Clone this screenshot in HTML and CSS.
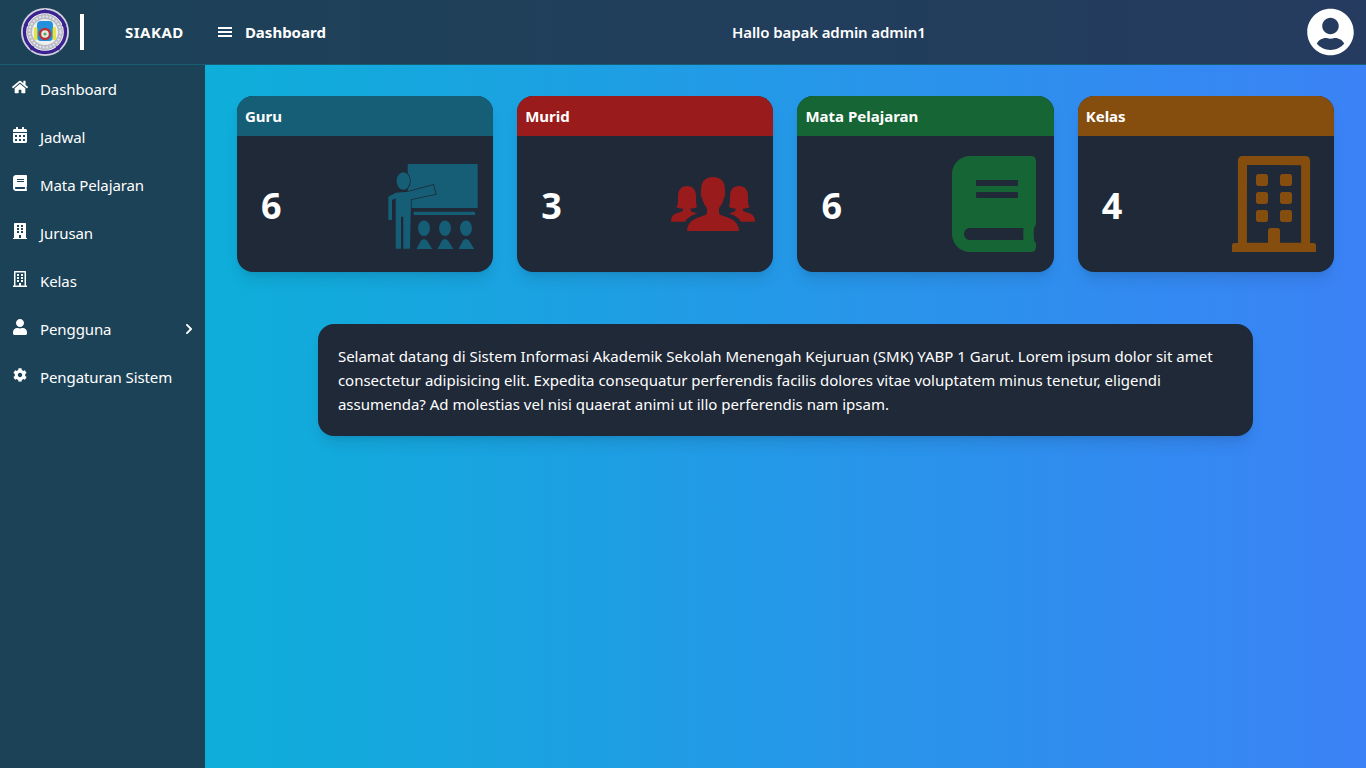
FILE: index.html
```html
<!DOCTYPE html>
<html lang="id">
<head>
  <meta charset="UTF-8" />
  <title>SIAKAD - Dashboard</title>
  <link rel="stylesheet" href="styles.css">
</head>
<body>
  <header class="topbar">
    <div class="brand">
      <svg class="logo" viewBox="0 0 48 48">
        <circle cx="24" cy="24" r="24" fill="#d5d3de"/>
        <circle cx="24" cy="24" r="22" fill="#fff"/>
        <circle cx="24" cy="24" r="20.5" fill="none" stroke="#3a2390" stroke-width="3.4"/>
        <path d="M24 1l4 4h-8zM45.5 17l-5 1.500 2-5.500zM38 43l-3-5 5.500-.5zM10 43l3-5-5.500-.5zM2.500 17l5 1.500-2-5.500z" fill="#3a2390"/>
        <circle cx="24" cy="24" r="18" fill="#b8bac4"/>
        <circle cx="24" cy="24" r="15.500" fill="none" stroke="#e4e4ea" stroke-width="2" stroke-dasharray="2 1.500"/>
        <circle cx="24" cy="24" r="13" fill="#eef0ee"/>
        <rect x="16" y="13" width="16" height="20" rx="4" fill="#2290dc"/>
        <rect x="13" y="19" width="3.400" height="13" rx="1.500" fill="#e9e33f"/>
        <rect x="31.600" y="19" width="3.400" height="13" rx="1.500" fill="#e9e33f"/>
        <circle cx="24" cy="26" r="6.200" fill="#b93232"/>
        <circle cx="24" cy="26" r="3.800" fill="#e3ebe0"/>
        <circle cx="24" cy="26" r="1.600" fill="#5fa56a"/>
      </svg>
      <span class="brand-line"></span>
      <span class="brand-name">SIAKAD</span>
    </div>
    <div class="page-name">
      <svg class="bars" viewBox="0 0 14 12"><path d="M0 1h14v2H0zM0 5h14v2H0zM0 9h14v2H0z" fill="#fff"/></svg>
      <span>Dashboard</span>
    </div>
    <div class="greeting">Hallo bapak admin admin1</div>
    <svg class="avatar" viewBox="0 0 496 512"><path fill="#fff" d="M248 8C111 8 0 119 0 256s111 248 248 248 248-111 248-248S385 8 248 8zm0 96c48.6 0 88 39.4 88 88s-39.4 88-88 88-88-39.4-88-88 39.4-88 88-88zm0 344c-58.7 0-111.3-26.6-146.5-68.2 18.8-35.4 55.6-59.8 98.5-59.8 2.4 0 4.8.4 7.1 1.1 13 4.2 26.6 6.9 40.9 6.9 14.3 0 28-2.7 40.9-6.9 2.3-.7 4.7-1.1 7.1-1.1 42.9 0 79.7 24.4 98.5 59.8C359.3 421.4 306.7 448 248 448z"/></svg>
  </header>

  <div class="layout">
    <nav class="sidebar">
      <a class="menu-item">
        <svg class="menu-icon" viewBox="0 0 576 512"><path d="M280.37 148.26L96 300.11V464a16 16 0 0 0 16 16l112.06-.29a16 16 0 0 0 15.92-16V368a16 16 0 0 1 16-16h64a16 16 0 0 1 16 16v95.64a16 16 0 0 0 16 16.05L464 480a16 16 0 0 0 16-16V300L295.67 148.26a12.19 12.19 0 0 0-15.3 0zM571.6 251.47L488 182.56V44.05a12 12 0 0 0-12-12h-56a12 12 0 0 0-12 12v72.61L318.47 43a48 48 0 0 0-61 0L4.34 251.47a12 12 0 0 0-1.6 16.9l25.5 31A12 12 0 0 0 45.15 301l235.22-193.74a12.19 12.19 0 0 1 15.3 0L530.9 301a12 12 0 0 0 16.9-1.6l25.5-31a12 12 0 0 0-1.7-16.93z"/></svg>
        <span>Dashboard</span>
      </a>
      <a class="menu-item">
        <svg class="menu-icon" viewBox="0 0 448 512"><path d="M0 464c0 26.5 21.5 48 48 48h352c26.5 0 48-21.5 48-48V192H0v272zm320-196c0-6.6 5.4-12 12-12h40c6.6 0 12 5.4 12 12v40c0 6.6-5.4 12-12 12h-40c-6.6 0-12-5.4-12-12v-40zm0 128c0-6.6 5.4-12 12-12h40c6.6 0 12 5.4 12 12v40c0 6.6-5.4 12-12 12h-40c-6.6 0-12-5.4-12-12v-40zM192 268c0-6.6 5.4-12 12-12h40c6.6 0 12 5.4 12 12v40c0 6.6-5.4 12-12 12h-40c-6.6 0-12-5.4-12-12v-40zm0 128c0-6.6 5.4-12 12-12h40c6.6 0 12 5.4 12 12v40c0 6.6-5.4 12-12 12h-40c-6.6 0-12-5.4-12-12v-40zM64 268c0-6.6 5.4-12 12-12h40c6.6 0 12 5.4 12 12v40c0 6.6-5.4 12-12 12H76c-6.6 0-12-5.4-12-12v-40zm0 128c0-6.6 5.4-12 12-12h40c6.6 0 12 5.4 12 12v40c0 6.6-5.4 12-12 12H76c-6.6 0-12-5.4-12-12v-40zM400 64h-48V16c0-8.8-7.2-16-16-16h-32c-8.8 0-16 7.2-16 16v48H160V16c0-8.8-7.2-16-16-16h-32c-8.8 0-16 7.2-16 16v48H48C21.5 64 0 85.5 0 112v48h448v-48c0-26.5-21.5-48-48-48z"/></svg>
        <span>Jadwal</span>
      </a>
      <a class="menu-item">
        <svg class="menu-icon" viewBox="0 0 448 512"><path d="M448 360V24c0-13.3-10.7-24-24-24H96C43 0 0 43 0 96v320c0 53 43 96 96 96h328c13.3 0 24-10.7 24-24v-16c0-7.5-3.5-14.3-8.9-18.7-4.2-15.4-4.2-59.3 0-74.7 5.4-4.3 8.9-11.1 8.9-18.6zM128 134c0-3.3 2.7-6 6-6h212c3.3 0 6 2.7 6 6v20c0 3.3-2.7 6-6 6H134c-3.3 0-6-2.7-6-6v-20zm0 64c0-3.3 2.7-6 6-6h212c3.3 0 6 2.7 6 6v20c0 3.3-2.7 6-6 6H134c-3.3 0-6-2.7-6-6v-20zm253.4 250H96c-17.7 0-32-14.3-32-32 0-17.6 14.4-32 32-32h285.4c-1.9 17.1-1.9 46.9 0 64z"/></svg>
        <span>Mata Pelajaran</span>
      </a>
      <a class="menu-item">
        <svg class="menu-icon" viewBox="0 0 448 512"><path d="M436 480h-20V24c0-13.255-10.745-24-24-24H56C42.745 0 32 10.745 32 24v456H12c-6.627 0-12 5.373-12 12v20h448v-20c0-6.627-5.373-12-12-12zM128 76c0-6.627 5.373-12 12-12h40c6.627 0 12 5.373 12 12v40c0 6.627-5.373 12-12 12h-40c-6.627 0-12-5.373-12-12V76zm0 96c0-6.627 5.373-12 12-12h40c6.627 0 12 5.373 12 12v40c0 6.627-5.373 12-12 12h-40c-6.627 0-12-5.373-12-12v-40zm52 148h-40c-6.627 0-12-5.373-12-12v-40c0-6.627 5.373-12 12-12h40c6.627 0 12 5.373 12 12v40c0 6.627-5.373 12-12 12zm76 160h-64v-84c0-6.627 5.373-12 12-12h40c6.627 0 12 5.373 12 12v84zm64-172c0 6.627-5.373 12-12 12h-40c-6.627 0-12-5.373-12-12v-40c0-6.627 5.373-12 12-12h40c6.627 0 12 5.373 12 12v40zm0-96c0 6.627-5.373 12-12 12h-40c-6.627 0-12-5.373-12-12v-40c0-6.627 5.373-12 12-12h40c6.627 0 12 5.373 12 12v40zm0-96c0 6.627-5.373 12-12 12h-40c-6.627 0-12-5.373-12-12V76c0-6.627 5.373-12 12-12h40c6.627 0 12 5.373 12 12v40z"/></svg>
        <span>Jurusan</span>
      </a>
      <a class="menu-item">
        <svg class="menu-icon" viewBox="0 0 448 512"><path d="M128 148v-40c0-6.6 5.4-12 12-12h40c6.6 0 12 5.4 12 12v40c0 6.6-5.4 12-12 12h-40c-6.6 0-12-5.4-12-12zm140 12h40c6.6 0 12-5.4 12-12v-40c0-6.6-5.4-12-12-12h-40c-6.6 0-12 5.4-12 12v40c0 6.6 5.4 12 12 12zm-128 96h40c6.6 0 12-5.4 12-12v-40c0-6.6-5.4-12-12-12h-40c-6.6 0-12 5.4-12 12v40c0 6.6 5.4 12 12 12zm128 0h40c6.6 0 12-5.4 12-12v-40c0-6.6-5.4-12-12-12h-40c-6.6 0-12 5.4-12 12v40c0 6.6 5.4 12 12 12zm-76 84v-40c0-6.6-5.4-12-12-12h-40c-6.6 0-12 5.4-12 12v40c0 6.6 5.4 12 12 12h40c6.6 0 12-5.4 12-12zm76 12h40c6.6 0 12-5.4 12-12v-40c0-6.6-5.4-12-12-12h-40c-6.6 0-12 5.4-12 12v40c0 6.6 5.4 12 12 12zm180 124v36H0v-36c0-6.6 5.4-12 12-12h19.5V24c0-13.3 10.7-24 24-24h337c13.3 0 24 10.7 24 24v440H436c6.6 0 12 5.4 12 12zM79.5 463H192v-67c0-6.6 5.4-12 12-12h40c6.6 0 12 5.4 12 12v67h112.5V49L80 48l-.5 415z"/></svg>
        <span>Kelas</span>
      </a>
      <a class="menu-item">
        <svg class="menu-icon" viewBox="0 0 448 512"><path d="M224 256c70.7 0 128-57.3 128-128S294.7 0 224 0 96 57.3 96 128s57.3 128 128 128zm89.6 32h-16.7c-22.2 10.2-46.9 16-72.9 16s-50.6-5.8-72.9-16h-16.7C60.2 288 0 348.2 0 422.4V464c0 26.5 21.5 48 48 48h352c26.5 0 48-21.5 48-48v-41.6c0-74.2-60.2-134.4-134.4-134.4z"/></svg>
        <span>Pengguna</span>
        <svg class="menu-arrow" viewBox="0 0 320 512"><path d="M285.476 272.971L91.132 467.314c-9.373 9.373-24.569 9.373-33.941 0l-22.667-22.667c-9.357-9.357-9.375-24.522-.04-33.901L188.505 256 34.484 101.255c-9.335-9.379-9.317-24.544.04-33.901l22.667-22.667c9.373-9.373 24.569-9.373 33.941 0L285.475 239.03c9.373 9.372 9.373 24.568.001 33.941z"/></svg>
      </a>
      <a class="menu-item">
        <svg class="menu-icon icon-cog" viewBox="0 0 512 512"><path d="M487.4 315.7l-42.6-24.6c4.3-23.2 4.3-47 0-70.2l42.6-24.6c4.9-2.8 7.1-8.6 5.5-14-11.1-35.6-30-67.8-54.7-94.6-3.8-4.1-10-5.1-14.8-2.3L380.8 110c-17.9-15.4-38.5-27.3-60.8-35.1V25.8c0-5.6-3.9-10.5-9.4-11.7-36.7-8.2-74.3-7.8-109.2 0-5.5 1.2-9.4 6.1-9.4 11.7V75c-22.2 7.9-42.8 19.8-60.8 35.1L88.7 85.5c-4.9-2.8-11-1.9-14.8 2.3-24.7 26.7-43.6 58.9-54.7 94.6-1.7 5.4.6 11.2 5.5 14L67.3 221c-4.3 23.2-4.3 47 0 70.2l-42.6 24.6c-4.9 2.8-7.1 8.6-5.5 14 11.1 35.6 30 67.8 54.7 94.6 3.8 4.1 10 5.1 14.8 2.3l42.6-24.6c17.9 15.4 38.5 27.3 60.8 35.1v49.2c0 5.6 3.9 10.5 9.4 11.7 36.7 8.2 74.3 7.8 109.2 0 5.5-1.2 9.4-6.1 9.4-11.7v-49.2c22.2-7.9 42.8-19.8 60.8-35.1l42.6 24.6c4.9 2.8 11 1.9 14.8-2.3 24.7-26.7 43.6-58.9 54.7-94.6 1.5-5.5-.7-11.3-5.6-14.1zM256 336c-44.1 0-80-35.9-80-80s35.9-80 80-80 80 35.9 80 80-35.9 80-80 80z"/></svg>
        <span>Pengaturan Sistem</span>
      </a>
    </nav>

    <main class="content">
      <section class="cards">
        <div class="card card-cyan">
          <div class="card-title">Guru</div>
          <div class="card-body">
            <span class="card-num">6</span>
            <svg class="card-icon icon-teacher" viewBox="0 0 90 86">
              <path d="M19.7 1h70v44h-70z"/>
              <path d="M25.7 48.7H87V52H25.7z"/>
              <ellipse cx="36" cy="65.3" rx="6" ry="7.7"/>
              <ellipse cx="57" cy="65.3" rx="6" ry="7.7"/>
              <ellipse cx="78" cy="65.3" rx="6" ry="7.7"/>
              <path d="M28.500 86L33 77.500Q36 74.500 39 77.500L44.300 86zM49.500 86L54 77.500Q57 74.500 60 77.500L65.300 86zM70.500 86L75 77.500Q78 74.500 81 77.500L86.300 86z"/>
              <g class="teacher-figure">
                <ellipse cx="15.3" cy="18" rx="6.7" ry="8.7"/>
                <path d="M.3 33.7L7.7 29.7 20.3 28.7 45.3 22 47.7 31 23 36.3 22 85.7H15.3V53.7H13V85.7H7.7V35.3L4 37V57H.3z"/>
              </g>
            </svg>
          </div>
        </div>
        <div class="card card-red">
          <div class="card-title">Murid</div>
          <div class="card-body">
            <span class="card-num">3</span>
            <svg class="card-icon icon-users" viewBox="0 0 84 55">
              <path id="side-girl" d="M16 9C10 9 7 13 7 19V25C7 28 6 29 5 30C7 31 10 31.5 12 31.5V33C12 35 8 35 4 37C1.5 38 0 41 0 44.7H14C16 41 20 38.5 26 36.5C22 35 20 35 19.5 33V31.5C21 31.5 24 31 26 30L25 25V19C25 13 22 9 16 9Z"/>
              <use href="#side-girl" transform="matrix(-1 0 0 1 84 0)"/>
              <path d="M42 0C34 0 30 5 30 13V18C30 20 31 21 31.5 22C32 26 34 29 36 31V36C36 38 31 39 26 41C20 43 16 48 16 54H68C68 48 64 43 58 41C53 39 48 38 48 36V31C50 29 52 26 52.5 22C53 21 54 20 54 18V13C54 5 50 0 42 0Z"/>
            </svg>
          </div>
        </div>
        <div class="card card-green">
          <div class="card-title">Mata Pelajaran</div>
          <div class="card-body">
            <span class="card-num">6</span>
            <svg class="card-icon icon-big" viewBox="0 0 448 512"><path d="M448 360V24c0-13.3-10.7-24-24-24H96C43 0 0 43 0 96v320c0 53 43 96 96 96h328c13.3 0 24-10.7 24-24v-16c0-7.5-3.5-14.3-8.9-18.7-4.2-15.4-4.2-59.3 0-74.7 5.4-4.3 8.9-11.1 8.9-18.6zM128 134c0-3.3 2.7-6 6-6h212c3.3 0 6 2.7 6 6v20c0 3.3-2.7 6-6 6H134c-3.3 0-6-2.7-6-6v-20zm0 64c0-3.3 2.7-6 6-6h212c3.3 0 6 2.7 6 6v20c0 3.3-2.7 6-6 6H134c-3.3 0-6-2.7-6-6v-20zm253.4 250H96c-17.7 0-32-14.3-32-32 0-17.6 14.4-32 32-32h285.4c-1.9 17.1-1.9 46.9 0 64z"/></svg>
          </div>
        </div>
        <div class="card card-brown">
          <div class="card-title">Kelas</div>
          <div class="card-body">
            <span class="card-num">4</span>
            <svg class="card-icon icon-big" viewBox="0 0 448 512"><path d="M128 148v-40c0-6.6 5.4-12 12-12h40c6.6 0 12 5.4 12 12v40c0 6.6-5.4 12-12 12h-40c-6.6 0-12-5.4-12-12zm140 12h40c6.6 0 12-5.4 12-12v-40c0-6.6-5.4-12-12-12h-40c-6.6 0-12 5.4-12 12v40c0 6.6 5.4 12 12 12zm-128 96h40c6.6 0 12-5.4 12-12v-40c0-6.6-5.4-12-12-12h-40c-6.6 0-12 5.4-12 12v40c0 6.6 5.4 12 12 12zm128 0h40c6.6 0 12-5.4 12-12v-40c0-6.6-5.4-12-12-12h-40c-6.6 0-12 5.4-12 12v40c0 6.6 5.4 12 12 12zm-76 84v-40c0-6.6-5.4-12-12-12h-40c-6.6 0-12 5.4-12 12v40c0 6.6 5.4 12 12 12h40c6.6 0 12-5.4 12-12zm76 12h40c6.6 0 12-5.4 12-12v-40c0-6.6-5.4-12-12-12h-40c-6.6 0-12 5.4-12 12v40c0 6.6 5.4 12 12 12zm180 124v36H0v-36c0-6.6 5.4-12 12-12h19.5V24c0-13.3 10.7-24 24-24h337c13.3 0 24 10.7 24 24v440H436c6.6 0 12 5.4 12 12zM79.5 463H192v-67c0-6.6 5.4-12 12-12h40c6.6 0 12 5.4 12 12v67h112.5V49L80 48l-.5 415z"/></svg>
          </div>
        </div>
      </section>

      <p class="welcome">Selamat datang di Sistem Informasi Akademik Sekolah Menengah Kejuruan (SMK) YABP 1 Garut. Lorem ipsum dolor sit amet consectetur adipisicing elit. Expedita consequatur perferendis facilis dolores vitae voluptatem minus tenetur, eligendi assumenda? Ad molestias vel nisi quaerat animi ut illo perferendis nam ipsam.</p>
    </main>
  </div>
</body>
</html>
```
FILE: styles.css
```css
* {
  box-sizing: border-box;
}
html, body {
  height: 100%;
}
body {
  margin: 0;
  font-family: "Noto Sans", "Open Sans", sans-serif;
  font-size: 15px;
  color: #fff;
  background: linear-gradient(to right, #06b6d4, #3b82f6);
  display: flex;
  flex-direction: column;
  overflow: hidden;
}

/* top bar */
.topbar {
  height: 65px;
  flex: none;
  display: flex;
  align-items: center;
  background: linear-gradient(to right, #1c4257, #253b5f);
  border-bottom: 1px solid #155e75;
}
.brand {
  width: 15%;
  height: 64px;
  flex: none;
  display: flex;
  align-items: center;
  padding-left: 21px;
}
.logo {
  width: 48px;
  height: 48px;
  flex: none;
  filter: blur(.5px);
}
.brand-line {
  width: 4px;
  height: 36px;
  margin-left: 11px;
  background: #fff;
}
.brand-name {
  margin-left: 41px;
  font-weight: 700;
  letter-spacing: .5px;
}
.page-name {
  width: 240px;
  flex: none;
  display: flex;
  align-items: center;
  gap: 13px;
  padding-left: 13px;
  font-weight: 700;
}
.bars {
  width: 14px;
  height: 12px;
}
.greeting {
  width: 320px;
  margin-left: 224px;
  text-align: center;
  font-weight: 600;
  letter-spacing: -.1px;
}
.avatar {
  width: 47px;
  height: 48px;
  margin-left: auto;
  margin-right: 12px;
}

/* sidebar */
.layout {
  flex: 1;
  display: flex;
  min-height: 0;
}
.sidebar {
  width: 15%;
  flex: none;
  background: #1c4257;
}
.menu-item {
  height: 48px;
  display: flex;
  align-items: center;
  padding-left: 12px;
  padding-right: 12px;
}
.menu-item span {
  margin-left: 12px;
  letter-spacing: -.1px;
}
.menu-icon {
  width: 16px;
  height: 16px;
  margin-top: -4px;
  fill: #fff;
}
.icon-cog {
  padding: 1px;
}
.menu-arrow {
  width: 8px;
  height: 12px;
  margin-left: auto;
  fill: #fff;
}

/* main content */
.content {
  flex: 1;
  padding: 31px 32px 0;
}
.cards {
  display: grid;
  grid-template-columns: repeat(4, 1fr);
  gap: 24px;
}
.card {
  height: 176px;
  border-radius: 16px;
  overflow: hidden;
  background: #1f2937;
  box-shadow: 0 10px 15px -3px rgba(0, 0, 0, .1), 0 4px 6px -4px rgba(0, 0, 0, .1);
}
.card-title {
  height: 40px;
  padding: 0 8px;
  display: flex;
  align-items: center;
  font-weight: 700;
}
.card-body {
  height: 136px;
  position: relative;
  padding: 2px 0 0 24px;
  display: flex;
  align-items: center;
}
.card-num {
  font-size: 36px;
  font-weight: 700;
}
.card-icon {
  position: absolute;
}
.icon-big {
  width: 84px;
  height: 96px;
  top: 20px;
  right: 18px;
}
.icon-teacher {
  width: 90px;
  height: 86px;
  top: 27px;
  right: 15px;
}
.icon-users {
  width: 84px;
  height: 55px;
  top: 41px;
  right: 18px;
}
.teacher-figure {
  stroke: #1f2937;
  stroke-width: 1.6;
  paint-order: stroke;
}
.card-cyan .card-title { background: #155e75; }
.card-cyan .card-icon { fill: #155e75; }
.card-red .card-title { background: #991b1b; }
.card-red .card-icon { fill: #991b1b; }
.card-green .card-title { background: #166534; }
.card-green .card-icon { fill: #166534; }
.card-brown .card-title { background: #854d0e; }
.card-brown .card-icon { fill: #854d0e; }

.welcome {
  margin: 52px 81px 0;
  padding: 20px;
  border-radius: 16px;
  background: #1f2937;
  line-height: 24px;
  box-shadow: 0 10px 15px -3px rgba(0, 0, 0, .1), 0 4px 6px -4px rgba(0, 0, 0, .1);
}
```
